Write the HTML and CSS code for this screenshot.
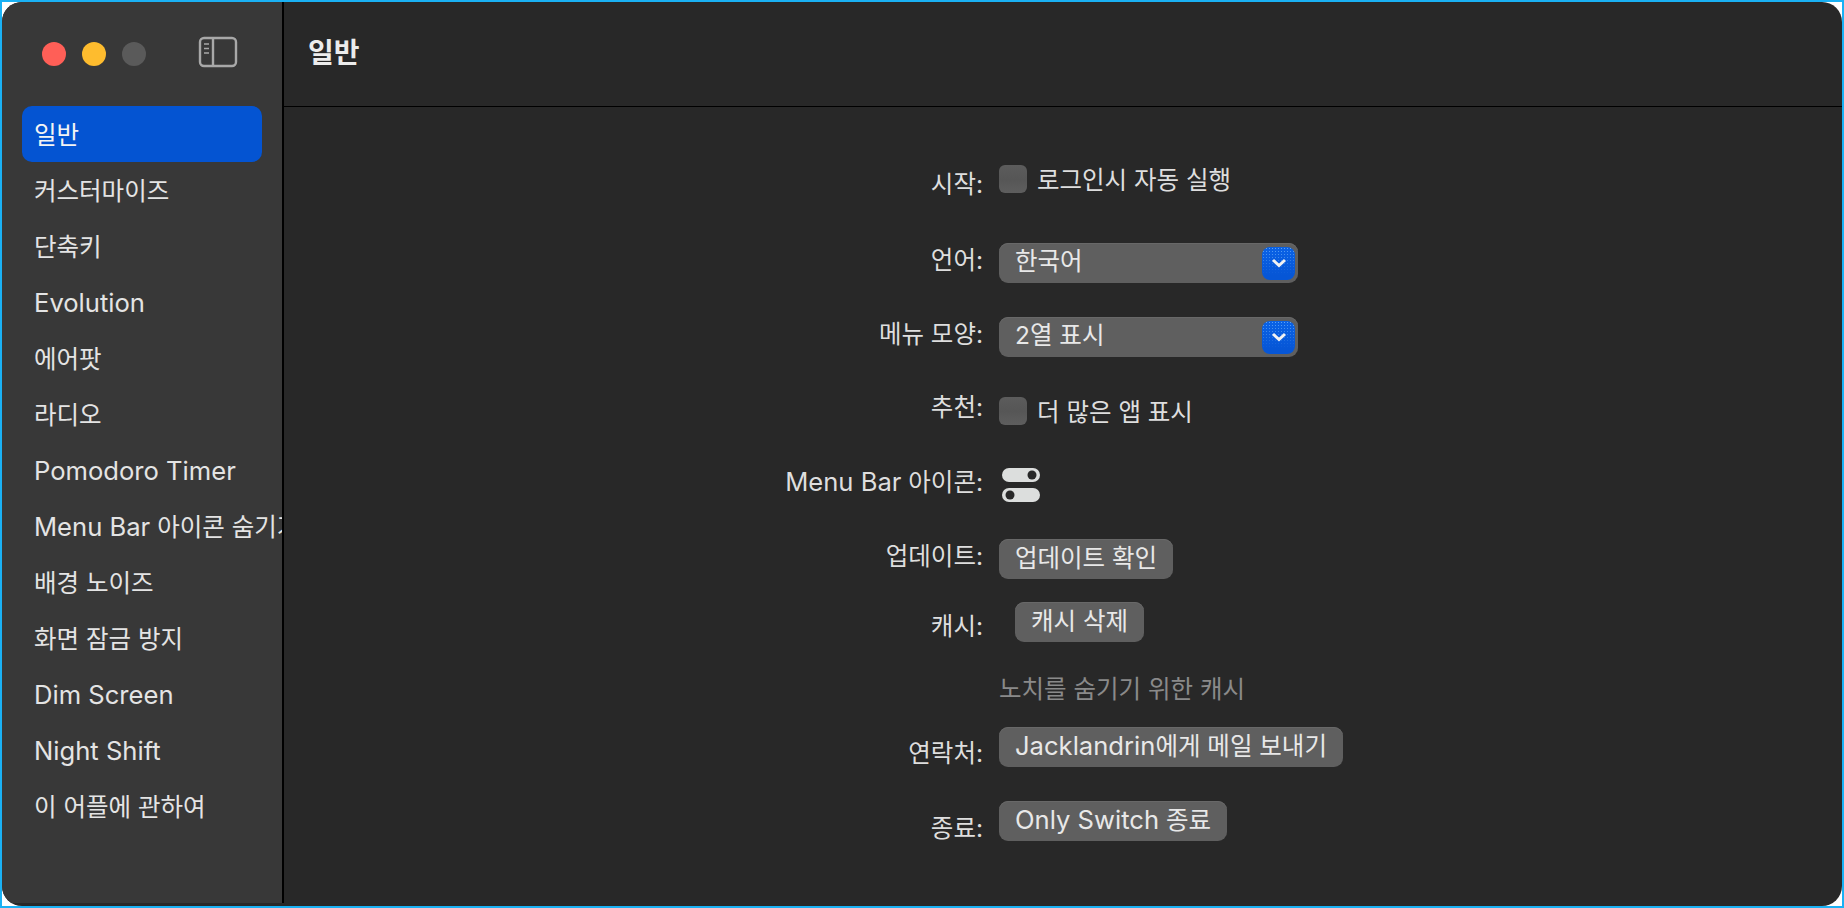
FILE: index.html
```html
<!DOCTYPE html>
<html lang="ko">
<head>
  <meta charset="UTF-8">
  <title>Only Switch</title>
  <link rel="stylesheet" href="styles.css">
</head>
<body>

<div class="frame">
  <div class="window">

    <!-- Sidebar -->
    <aside class="sidebar">
      <div class="toolbar">
        <div class="lights">
          <span class="light red"></span>
          <span class="light yellow"></span>
          <span class="light gray"></span>
        </div>
        <svg class="sidebar-icon" width="40" height="32" viewBox="0 0 40 32" fill="none" stroke="#a8a8a8" stroke-width="2.4">
          <rect x="2" y="2" width="36" height="28" rx="4"/>
          <path d="M15 2v28"/>
          <path d="M6 8h5M6 12.5h5M6 17h5" stroke-width="1.5"/>
        </svg>
      </div>
      <nav class="nav">
        <div class="nav-item active">일반</div>
        <div class="nav-item">커스터마이즈</div>
        <div class="nav-item">단축키</div>
        <div class="nav-item lat">Evolution</div>
        <div class="nav-item">에어팟</div>
        <div class="nav-item">라디오</div>
        <div class="nav-item lat">Pomodoro Timer</div>
        <div class="nav-item"><span class="lat">Menu Bar</span> 아이콘 숨기기</div>
        <div class="nav-item">배경 노이즈</div>
        <div class="nav-item">화면 잠금 방지</div>
        <div class="nav-item lat">Dim Screen</div>
        <div class="nav-item lat">Night Shift</div>
        <div class="nav-item">이 어플에 관하여</div>
      </nav>
    </aside>

    <!-- Main panel -->
    <main class="main">
      <header class="header">일반</header>

      <div class="form">
        <div class="label down-2">시작:</div>
        <div class="control check-row"><span class="check"></span>로그인시 자동 실행</div>

        <div class="label">언어:</div>
        <div class="control">
          <div class="select">한국어
            <span class="select-arrow">
              <svg width="16" height="10" viewBox="0 0 16 10" fill="none" stroke="#f2f2f2" stroke-width="3"><path d="M2 2l6 5.5L14 2"/></svg>
            </span>
          </div>
        </div>

        <div class="label">메뉴 모양:</div>
        <div class="control">
          <div class="select">2열 표시
            <span class="select-arrow">
              <svg width="16" height="10" viewBox="0 0 16 10" fill="none" stroke="#f2f2f2" stroke-width="3"><path d="M2 2l6 5.5L14 2"/></svg>
            </span>
          </div>
        </div>

        <div class="label up-7">추천:</div>
        <div class="control check-row"><span class="check"></span>더 많은 앱 표시</div>

        <div class="label up-3"><span class="lat">Menu Bar</span> 아이콘:</div>
        <div class="control toggle-icon">
          <svg width="38" height="34" viewBox="0 0 38 34">
            <rect width="38" height="14" rx="7" fill="#dcdedd"/>
            <circle cx="30" cy="7" r="4.5" fill="#282828"/>
            <rect y="20" width="38" height="14" rx="7" fill="#dcdedd"/>
            <circle cx="8" cy="27" r="4.5" fill="#282828"/>
          </svg>
        </div>

        <div class="label">업데이트:</div>
        <div class="control"><button class="btn">업데이트 확인</button></div>

        <div class="label down-7">캐시:</div>
        <div class="control"><button class="btn indented">캐시 삭제</button></div>

        <div class="label"></div>
        <div class="control hint">노치를 숨기기 위한 캐시</div>

        <div class="label down-9">연락처:</div>
        <div class="control"><button class="btn"><span class="lat">Jacklandrin</span>에게 메일 보내기</button></div>

        <div class="label down-10">종료:</div>
        <div class="control"><button class="btn"><span class="lat">Only Switch</span> 종료</button></div>
      </div>
    </main>

  </div>
</div>

</body>
</html>
```

FILE: styles.css
```css
/* Global */
html, body {
  margin: 0;
  height: 100%;
  overflow: hidden;
}

body {
  font-family: Inter, "Noto Sans CJK KR", sans-serif;
  font-size: 24.5px;
  color: #e4e4e4;
}

/* Latin runs sit a little larger than the Hangul around them */
.lat {
  font-size: 25.6px;
}

.frame {
  box-sizing: border-box;
  height: 100vh;
  border: 2px solid #1ab1f4;
  background: #fff;
}

.window {
  display: flex;
  height: 100%;
  padding-bottom: 3px;
  box-sizing: border-box;
  border-radius: 20px;
  overflow: hidden;
  background: #282828;
}

/* Sidebar */
.sidebar {
  width: 280px;
  flex-shrink: 0;
  background: #383838;
  border-right: 2px solid #000;
  overflow: hidden;
}

.toolbar {
  display: flex;
  align-items: center;
  height: 104px;
  padding-left: 40px;
}

.lights {
  display: flex;
  gap: 16px;
}

.light {
  width: 24px;
  height: 24px;
  border-radius: 50%;
}

.light.red { background: #ff5f57; }
.light.yellow { background: #febc2e; }
.light.gray { background: #5a5a5a; }

.sidebar-icon {
  margin-left: 52px;
  margin-top: -4px;
}

.nav {
  display: flex;
  flex-direction: column;
  margin-left: 20px;
  width: 240px;
}

.nav-item {
  height: 56px;
  line-height: 58px;
  padding-left: 12px;
  white-space: nowrap;
}

.nav-item.active {
  background: #0454d2;
  border-radius: 10px;
  color: #f4f4f4;
}

/* Main panel */
.main {
  flex: 1;
  min-width: 0;
}

.header {
  height: 104px;
  line-height: 102px;
  padding-left: 24px;
  font-size: 28px;
  font-weight: 700;
  border-bottom: 1px solid #000;
  color: #ececec;
}

.form {
  display: grid;
  grid-template-columns: 699px auto;
  grid-template-rows: 78px 74px 80px 71px 71px 63px 72px 53px 74px 40px;
  column-gap: 16px;
  padding-top: 58px;
  align-items: start;
  color: #dedede;
}

.label {
  text-align: right;
  line-height: 34px;
  white-space: nowrap;
}

.up-7 { margin-top: -7px; }
.up-3 { margin-top: -3px; }
.down-2 { margin-top: 2px; }
.down-7 { margin-top: 7px; }
.down-9 { margin-top: 9px; }
.down-10 { margin-top: 10px; }

.control {
  display: flex;
  align-items: flex-start;
}

.toggle-icon {
  margin-left: 3px;
}

/* Checkbox rows */
.check-row {
  line-height: 30px;
}

.check {
  width: 28px;
  height: 28px;
  margin-right: 10px;
  border-radius: 6px;
  background: linear-gradient(#5c5c5c, #565656 50%, #5e5e5e);
}

/* Pop-up buttons */
.select {
  display: flex;
  align-items: center;
  justify-content: space-between;
  box-sizing: border-box;
  width: 299px;
  height: 40px;
  padding: 0 3px 8px 16px;
  border-radius: 9px;
  background: #5f5f5f;
  box-shadow: inset 0 1px 0 #686868;
  color: #e8e8e8;
}

.select-arrow {
  display: flex;
  align-items: center;
  justify-content: center;
  width: 33px;
  height: 33px;
  margin-top: 8px;
  border-radius: 8px;
  background:
    linear-gradient(rgba(6, 86, 214, 0), #0656d6 85%),
    radial-gradient(circle, rgba(130, 195, 255, 0.7) 0.8px, transparent 1px) 0 0 / 3px 3px,
    #0a62e6;
}

/* Buttons */
.btn {
  height: 40px;
  padding: 0 16px 7px;
  border: none;
  border-radius: 9px;
  background: #5f5f5f;
  box-shadow: inset 0 1px 0 #686868;
  font: inherit;
  color: #e8e8e8;
  white-space: nowrap;
}

.btn.indented {
  margin-left: 16px;
}

.hint {
  line-height: 30px;
  color: #8a8a8a;
}
```
